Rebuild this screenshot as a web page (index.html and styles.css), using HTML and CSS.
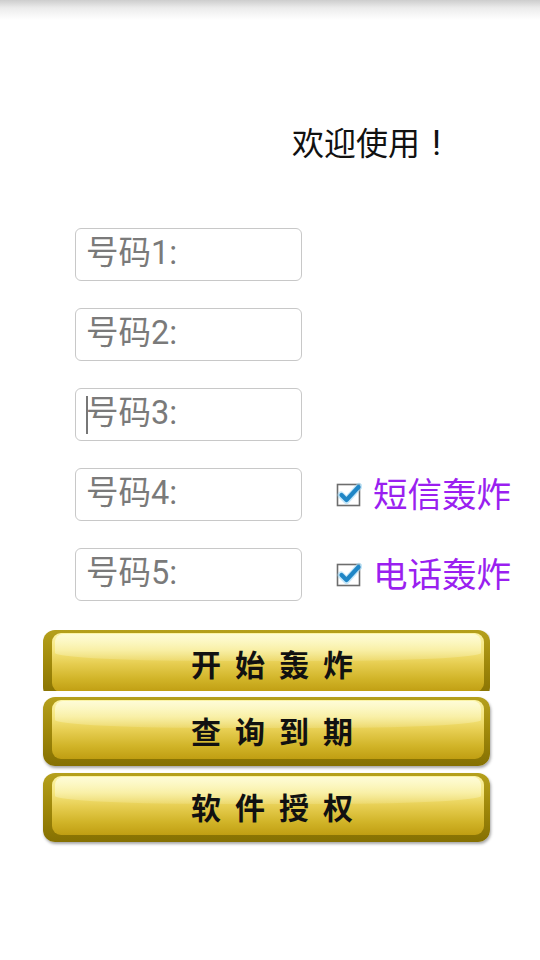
FILE: index.html
```html
<!DOCTYPE html>
<html lang="zh-CN">
<head>
<meta charset="utf-8">
<title>欢迎使用</title>
<link rel="stylesheet" href="styles.css">
</head>
<body>
<div class="shade"></div>
<div class="title">欢迎使用<span class="excl">!</span></div>
<div class="form">
  <div class="row"><div class="input"><span class="ph">号码1:</span></div></div>
  <div class="row"><div class="input"><span class="ph">号码2:</span></div></div>
  <div class="row"><div class="input"><span class="caret"></span><span class="ph">号码3:</span></div></div>
  <div class="row">
    <div class="input"><span class="ph">号码4:</span></div>
    <label class="check">
      <svg class="box" width="26" height="26" viewBox="0 0 26 26">
        <rect x="1.5" y="3.5" width="22" height="21" fill="#fff" stroke="#6d6d6d" stroke-width="1.6"/>
        <path d="M5 14 L10.5 19.5 L23 5.5" fill="none" stroke="#9fd7f5" stroke-width="7" stroke-linecap="round" stroke-linejoin="round" opacity="0.6"/>
        <path d="M5.5 14 L10.5 19 L22.5 6" fill="none" stroke="#1f86c6" stroke-width="4.2" stroke-linecap="round" stroke-linejoin="round"/>
      </svg>
      <span class="lbl">短信轰炸</span>
    </label>
  </div>
  <div class="row">
    <div class="input"><span class="ph">号码5:</span></div>
    <label class="check">
      <svg class="box" width="26" height="26" viewBox="0 0 26 26">
        <rect x="1.5" y="3.5" width="22" height="21" fill="#fff" stroke="#6d6d6d" stroke-width="1.6"/>
        <path d="M5 14 L10.5 19.5 L23 5.5" fill="none" stroke="#9fd7f5" stroke-width="7" stroke-linecap="round" stroke-linejoin="round" opacity="0.6"/>
        <path d="M5.5 14 L10.5 19 L22.5 6" fill="none" stroke="#1f86c6" stroke-width="4.2" stroke-linecap="round" stroke-linejoin="round"/>
      </svg>
      <span class="lbl">电话轰炸</span>
    </label>
  </div>
</div>
<div class="actions">
  <div class="btn-wrap clip"><div class="btn"><div class="face"><span class="gloss"></span><span class="txt">开始轰炸</span></div></div></div>
  <div class="btn-wrap"><div class="btn"><div class="face"><span class="gloss"></span><span class="txt">查询到期</span></div></div></div>
  <div class="btn-wrap"><div class="btn"><div class="face"><span class="gloss"></span><span class="txt">软件授权</span></div></div></div>
</div>
</body>
</html>
```
FILE: styles.css
```css
html, body {
  margin: 0;
  padding: 0;
  background: #ffffff;
}
body {
  width: 540px;
  height: 960px;
  overflow: hidden;
  font-family: Roboto, "Noto Sans CJK SC", sans-serif;
}
.shade {
  height: 20px;
  background: linear-gradient(to bottom, #cdcdcd 0%, #ececec 40%, #ffffff 100%);
}
.title {
  margin-top: 104px;
  height: 40px;
  line-height: 40px;
  padding-left: 292px;
  font-size: 32px;
  color: #111;
}
.excl {
  margin-left: 12px;
  font-size: 35px;
}
.form {
  margin-top: 64px;
  display: flex;
  flex-direction: column;
  gap: 28px;
  padding-left: 75px;
}
.row {
  display: flex;
  align-items: center;
  height: 52px;
}
.input {
  position: relative;
  box-sizing: border-box;
  width: 227px;
  height: 53px;
  border: 1.5px solid #c8c8c8;
  border-radius: 6px;
  background: #fff;
  display: flex;
  align-items: center;
  padding-left: 10px;
}
.ph {
  font-size: 32.5px;
  color: #7a7a7a;
  line-height: 1;
  margin-top: -1px;
}
.caret {
  position: absolute;
  left: 10px;
  top: 7px;
  width: 1.5px;
  height: 38px;
  background: #777;
}
.check {
  display: flex;
  align-items: center;
  margin-left: 34px;
}
.box {
  display: block;
  margin-top: 0;
}
.lbl {
  margin-left: 11px;
  font-size: 34.5px;
  color: #9a1ff0;
  line-height: 1;
  margin-top: 3px;
}
.actions {
  margin-top: 30px;
  padding: 0 50px 0 43px;
  display: flex;
  flex-direction: column;
  gap: 6px;
}
.btn-wrap {
  height: 70px;
}
.btn-wrap.clip {
  height: 61px;
  overflow: hidden;
}
.btn {
  box-sizing: border-box;
  height: 69px;
  border-radius: 12px;
  padding: 3px 6px 7px 9px;
  background: linear-gradient(to bottom, #b5a01c 0%, #9f880a 50%, #857002 100%);
  box-shadow: 1px 2px 3px rgba(0, 0, 0, 0.35);
}
.face {
  position: relative;
  height: 100%;
  border-radius: 9px;
  overflow: hidden;
  background: linear-gradient(to bottom, #fbf3a6 0%, #f5e67f 28%, #e6cd50 52%, #d1b428 78%, #c09e12 100%);
  display: flex;
  align-items: center;
  justify-content: center;
}
.gloss {
  position: absolute;
  left: 3px;
  right: 3px;
  top: 1px;
  height: 45%;
  border-radius: 8px 8px 40% 40% / 8px 8px 30% 30%;
  background: linear-gradient(to bottom, rgba(255, 255, 230, 0.75), rgba(255, 255, 220, 0.15));
}
.txt {
  position: relative;
  font-family: "Noto Sans CJK SC", sans-serif;
  font-weight: 700;
  font-size: 30px;
  letter-spacing: 14px;
  padding-left: 22px;
  color: #111;
  line-height: 1;
}
```
